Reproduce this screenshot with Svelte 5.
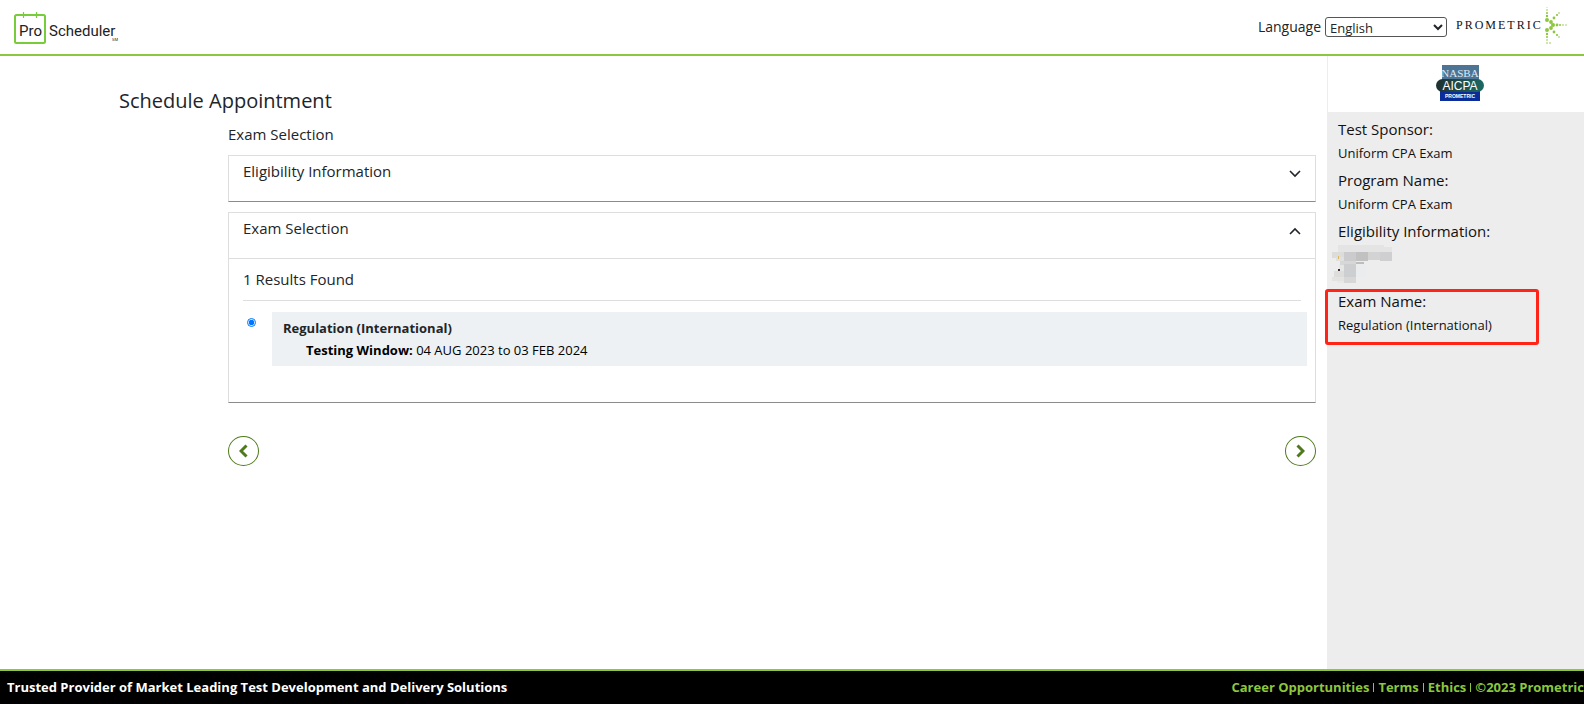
<script>
  let language = $state('English');
  let selected = $state('regulation');
  let openInfo = $state(false);
  let openExam = $state(true);

  // Coloured tiles covering the private eligibility number: x, y, w, h, colour
  const tiles = [
    [6, 0, 46, 7, '#e4e4e4'], [0, 7, 12, 6, '#dcdcda'], [12, 7, 12, 9, '#cbcbcd'],
    [24, 7, 12, 9, '#c1c1c2'], [36, 7, 12, 8, '#d3d3d4'], [48, 7, 12, 9, '#cfcfd1'],
    [48, 2, 12, 5, '#e4e4e5'], [4, 12, 8, 4, '#e0e0e0'], [8, 16, 16, 4, '#d6d7d7'],
    [24, 17, 8, 2, '#bdbdbf'], [7, 20, 5, 6, '#e6e6e6'], [12, 19, 12, 13, '#cdcecf'],
    [2, 26, 10, 6, '#dddddb'], [0, 32, 12, 4, '#e3e3e1'], [12, 32, 12, 6, '#d7d7d8'],
    [24, 20, 10, 12, '#ebecee'], [5, 36, 7, 2, '#e8e8e8']
  ];

  // Burst dots of the Prometric mark: x, y, radius
  const dots = [
    [4, 2, 0.6], [4, 5, 0.8], [4, 8, 1], [4, 11, 1.2], [4, 15, 2], [8, 17, 1.9], [11, 13, 1.4],
    [14, 10, 1.1], [16, 8, 0.8], [10, 20, 2], [14, 20, 1.4], [17, 20, 1], [20, 20, 0.8],
    [23, 20, 0.7], [8, 23, 1.9], [4, 25, 2], [11, 27, 1.4], [14, 30, 1.1], [16, 32, 0.8],
    [4, 29, 1.2], [4, 32, 1], [4, 35, 0.8], [4, 38, 0.8], [7, 38, 0.8]
  ];
</script>

<div class="page">
  <header class="top">
    <a class="brand" href="#home" aria-label="Pro Scheduler">
      <svg width="112" height="34" viewBox="0 0 112 34">
        <g fill="none" stroke="#78cc3c">
          <rect x="1" y="5" width="30" height="28" rx="1.5" stroke-width="2" />
          <path d="M9.5 2v6M22.500 2v6" stroke-width="1.200" />
        </g>
        <g fill="#222" font-family="Roboto, sans-serif" font-size="15">
          <text x="5" y="26">Pro</text>
          <text x="35" y="26">Scheduler<tspan x="98" y="31" font-size="4">SM</tspan></text>
        </g>
      </svg>
    </a>
    <div class="tools">
      <label for="language">Language</label>
      <select id="language" bind:value={language}>
        <option>English</option>
        <option>Français</option>
        <option>Español</option>
      </select>
      <svg class="prometric" width="112" height="40" viewBox="0 0 112 40" role="img" aria-label="Prometric">
        <text class="wordmark" x="0" y="22">PROMETRIC</text>
        <g transform="translate(87 -2)" fill="#8dc63f">
          {#each dots as [x, y, r]}<circle cx={x} cy={y} {r} />{/each}
        </g>
      </svg>
    </div>
  </header>

  <div class="body">
    <main>
      <h1>Schedule Appointment</h1>
      <div class="content">
        <h2>Exam Selection</h2>

        <section class="panel">
          <button class="panel-head" aria-expanded={openInfo} onclick={() => (openInfo = !openInfo)}>
            <span>Eligibility Information</span>
            <svg width="12" height="8" viewBox="0 0 12 8"><path d="M1 1l5 5 5-5" /></svg>
          </button>
        </section>

        <section class="panel">
          <button class="panel-head" aria-expanded={openExam} onclick={() => (openExam = !openExam)}>
            <span>Exam Selection</span>
            <svg width="12" height="8" viewBox="0 0 12 8"><path d="M1 7l5-5 5 5" /></svg>
          </button>
          {#if openExam}
            <div class="results">
              <p class="count">1 Results Found</p>
              <div class="exam">
                <input id="exam" type="radio" name="exam" value="regulation" bind:group={selected} />
                <label for="exam">
                  <strong>Regulation (International)</strong>
                  <span class="window"><b>Testing Window:</b> 04 AUG 2023 to 03 FEB 2024</span>
                </label>
              </div>
            </div>
          {/if}
        </section>

        <div class="pager">
          <button aria-label="Previous">
            <svg width="9" height="14" viewBox="0 0 9 14"><path d="M7.500 1.500L2 7l5.500 5.500" /></svg>
          </button>
          <button aria-label="Next">
            <svg width="9" height="14" viewBox="0 0 9 14"><path d="M1.500 1.500L7 7l-5.500 5.500" /></svg>
          </button>
        </div>
      </div>
    </main>

    <aside>
      <div class="sponsor">
        <svg width="48" height="36" viewBox="0 0 48 36" role="img" aria-label="NASBA AICPA Prometric">
          <defs>
            <linearGradient id="pill"><stop stop-color="#1f2f30" /><stop offset="1" stop-color="#1d6a63" /></linearGradient>
          </defs>
          <rect x="6" width="37" height="15" fill="#4e7495" />
          <rect x="4" y="26" width="40" height="10" fill="#0a2d9a" />
          <rect y="14" width="48" height="13" rx="6.500" fill="url(#pill)" />
          <g fill="#fff" text-anchor="middle">
            <text x="24" y="12" font-size="11" font-family="Liberation Serif, serif" fill="#dfe9f1">NASBA</text>
            <text x="24" y="25" font-size="12" font-family="Liberation Sans, sans-serif">AICPA</text>
            <text x="24" y="33" font-size="5" font-weight="700" font-family="Liberation Sans, sans-serif">PROMETRIC</text>
          </g>
        </svg>
      </div>
      <dl>
        <div>
          <dt>Test Sponsor:</dt>
          <dd>Uniform CPA Exam</dd>
        </div>
        <div>
          <dt>Program Name:</dt>
          <dd>Uniform CPA Exam</dd>
        </div>
        <div>
          <dt>Eligibility Information:</dt>
          <dd class="masked">
            <svg width="60" height="39" viewBox="0 0 60 39" shape-rendering="crispEdges">
              {#each tiles as [x, y, w, h, c]}<rect {x} {y} width={w} height={h} fill={c} />{/each}
              <path d="M6 11h1v3h-1z" fill="#d9b960" />
              <path d="M6 24h2v2h-2z" fill="#333" />
            </svg>
          </dd>
        </div>
        <div class="marked">
          <dt>Exam Name:</dt>
          <dd>Regulation (International)</dd>
        </div>
      </dl>
    </aside>
  </div>

  <footer>
    <span>Trusted Provider of Market Leading Test Development and Delivery Solutions</span>
    <nav>
      <a href="#careers">Career Opportunities</a><i></i>
      <a href="#terms">Terms</a><i></i>
      <a href="#ethics">Ethics</a><i></i>
      <a href="#copyright">©2023 Prometric</a>
    </nav>
  </footer>
</div>

<style>
  :global(body) { margin: 0; background: #fff; }
  .page, .page *, .marked::after { box-sizing: border-box; }
  .page {
    display: flex;
    flex-direction: column;
    min-height: 100vh;
    overflow-x: hidden;
    color: #212529;
    font: 15px/24px "Open Sans", "Noto Sans", sans-serif;
  }
  button, select { font: inherit; color: inherit; }
  svg { display: block; flex: none; }

  .top {
    display: flex;
    justify-content: space-between;
    align-items: center;
    height: 56px;
    padding: 0 16px 0 14px;
    border-bottom: 2px solid #8dc63f;
  }
  .tools { display: flex; align-items: center; gap: 4px; font-size: 14px; }
  .tools select {
    width: 122px;
    height: 20px;
    padding: 0;
    border: 1px solid #555;
    border-radius: 3px;
    background: #fff;
    font-size: 13px;
    line-height: normal;
  }
  .prometric { margin-left: 5px; }
  .wordmark { font: 12px "Liberation Serif", serif; letter-spacing: 2px; fill: #111; }

  .body { flex: 1; display: grid; grid-template-columns: 1fr 257px; }
  main { padding: 31px 11px 0 119px; }
  h1, h2, p, dl, dd { margin: 0; font-weight: 400; }
  h1 { font-size: 20px; line-height: 28px; }
  .content { padding-left: 109px; }
  h2 { padding: 7px 0 9px; font-size: 15px; line-height: 24px; }

  .panel {
    margin-bottom: 10px;
    border: 1px solid #dedede;
    border-bottom-color: #8b8b8b;
  }
  .panel-head {
    display: flex;
    justify-content: space-between;
    align-items: flex-start;
    width: 100%;
    height: 45px;
    padding: 3px 14px;
    border: 0;
    background: none;
    text-align: left;
  }
  .panel-head svg { margin-top: 11px; }
  .panel-head path { fill: none; stroke: #212529; stroke-width: 1.6; }

  .results { padding: 8px 8px 36px 14px; border-top: 1px solid #dedede; }
  .count { margin-right: 6px; padding-bottom: 9px; border-bottom: 1px solid #dedede; }
  .exam { display: flex; align-items: flex-start; gap: 16px; padding-top: 11px; }
  .exam input { width: 9px; height: 9px; margin: 6px 0 0 4px; accent-color: #0075ff; }
  .exam label {
    flex: 1;
    padding: 5px 11px;
    background: #edf1f4;
    font-size: 13px;
    line-height: 22px;
  }
  .exam strong, .window { display: block; }
  .window { padding-left: 23px; color: #000; }

  .pager { display: flex; justify-content: space-between; padding-top: 23px; }
  .pager button {
    display: grid;
    place-items: center;
    width: 31px;
    height: 30px;
    padding: 0;
    border: 1px solid #4f7a1c;
    border-radius: 50%;
    background: #fff;
  }
  .pager path { fill: none; stroke: #4f7a1c; stroke-width: 3; }

  aside { background: #ededed; }
  .sponsor {
    display: flex;
    justify-content: center;
    height: 56px;
    padding: 9px 0 0 8px;
    border-left: 1px solid #ededed;
    background: #fff;
  }
  dl { padding: 5px 11px; color: #111; }
  dl > div { margin-bottom: 3px; }
  dt { line-height: 24px; }
  dd { font-size: 13px; line-height: 24px; }
  .masked { height: 43px; margin-left: -6px; padding-top: 2px; }
  .marked { position: relative; }
  .marked::after {
    content: "";
    position: absolute;
    top: 0;
    left: -13px;
    width: 214px;
    height: 56px;
    border: 3px solid #ff2318;
    border-radius: 3px;
  }

  footer {
    display: flex;
    justify-content: space-between;
    height: 35px;
    padding-left: 7px;
    border-top: 2px solid #8dc63f;
    background: #000;
    color: #fff;
    font-size: 13px;
    font-weight: 700;
    line-height: 33px;
    white-space: nowrap;
  }
  nav { display: flex; align-items: center; gap: 4px; }
  nav a { color: #8dc63f; text-decoration: none; }
  nav i { width: 1px; height: 9px; background: #8dc63f; }
</style>
